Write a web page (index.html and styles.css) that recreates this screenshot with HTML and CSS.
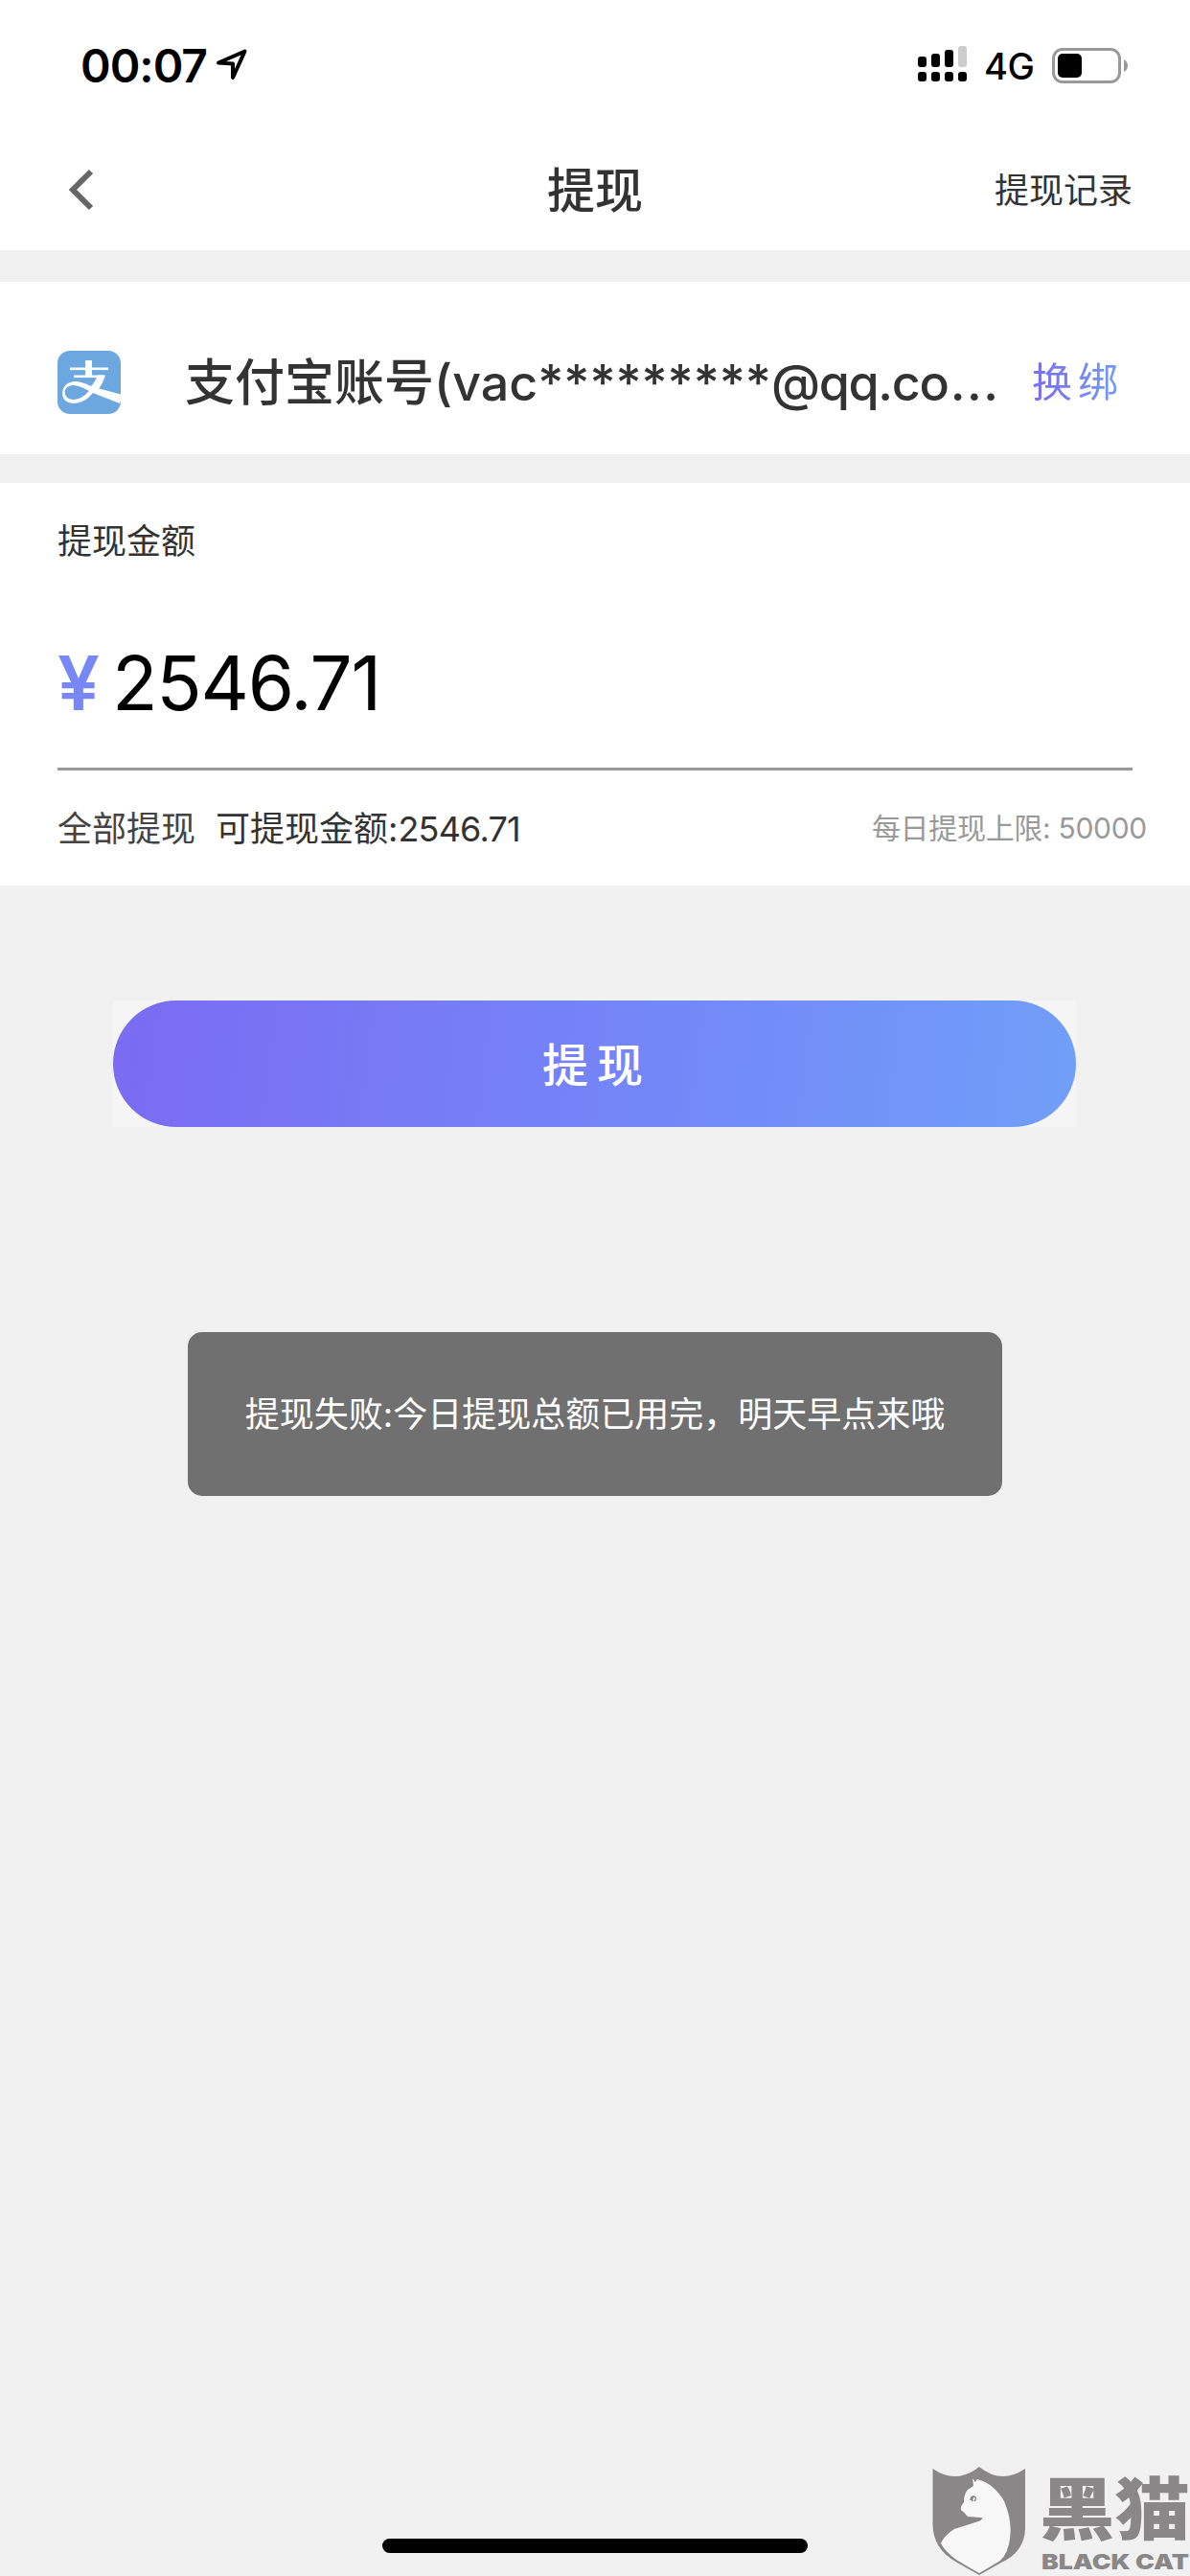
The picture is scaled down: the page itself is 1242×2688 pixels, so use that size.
FILE: index.html
```
<!DOCTYPE html>
<html lang="zh-CN">

<head>
    <meta charset="UTF-8">
    <meta name="viewport" content="width=device-width, initial-scale=1.0">
    <title>提现</title>
    <link rel="stylesheet" href="styles.css">
</head>

<body>
    <div class="status-bar">
        <span class="time">00:07</span>
        <svg class="location" width="34" height="34" viewBox="0 0 34 34">
            <path d="M3 15.5 L30.5 3.5 L18 31 V16.5 Z" fill="none" stroke="#000" stroke-width="4" stroke-linejoin="round"/>
        </svg>
        <svg class="signal" width="51" height="37" viewBox="0 0 51 37">
            <rect x="0" y="11" width="9" height="11" rx="3"/>
            <rect x="14" y="8" width="9" height="14" rx="3"/>
            <rect x="28" y="4" width="9" height="18" rx="3"/>
            <rect x="42" y="0" width="9" height="22" rx="3" fill="#ccc"/>
            <rect x="0" y="27" width="9" height="10" rx="3"/>
            <rect x="14" y="27" width="9" height="10" rx="3"/>
            <rect x="28" y="27" width="9" height="10" rx="3"/>
            <rect x="42" y="27" width="9" height="10" rx="3"/>
        </svg>
        <span class="network">4G</span>
        <svg class="battery" width="80" height="37" viewBox="0 0 80 37">
            <rect x="1.5" y="1.5" width="69" height="34" rx="9.5" fill="none" stroke="#999" stroke-width="3"/>
            <rect x="6" y="6" width="25" height="25" rx="5"/>
            <path d="M75 12 Q79 14 79 18.500 Q79 23 75 25 Z" fill="#999"/>
        </svg>
    </div>

    <div class="nav-bar">
        <svg class="back" width="28" height="44" viewBox="0 0 28 44">
            <path d="M23 3 L4 22 L23 41" fill="none" stroke="#666" stroke-width="6"/>
        </svg>
        <h1>提现</h1>
        <a class="record">提现记录</a>
    </div>

    <div class="card account">
        <svg class="alipay" width="66" height="66" viewBox="0 0 66 66">
            <rect width="66" height="66" rx="13" fill="#6ca8df"/>
            <g fill="#fff">
                <rect x="29" y="10" width="7" height="16"/>
                <rect x="13" y="17.500" width="40" height="2.600"/>
                <rect x="17" y="25.500" width="31" height="2.600"/>
                <path d="M42 25.500 H50 Q47 35 41.500 42 L66 51 L65 55 L37 44 Q28 55 17 55 Q5 54 5 44 Q6 33 18 32 Q25 32 35 37 Q39 33 42 25.500 Z M33 42 Q23 36 16 36 Q8 37 7.500 43 Q8 50 16 51 Q25 51 33 42 Z" fill-rule="evenodd"/>
                <path d="M38 38 L66 45.500 V53 L36 43 Z"/>
            </g>
        </svg>
        <div class="account-name">支付宝账号(vac*********<span class="mail">@qq.co</span><span class="dots">...</span></div>
        <a class="rebind">换绑</a>
    </div>

    <div class="card amount">
        <div class="label">提现金额</div>
        <div class="money">
            <span class="yen">¥</span>
            <span class="number">2546.71</span>
        </div>
        <div class="summary">
            <span class="all">全部提现</span>
            <span class="available">可提现金额:<span class="digits">2546.71</span></span>
            <span class="limit">每日提现上限: 50000</span>
        </div>
    </div>

    <div class="submit-wrap">
        <button class="submit">提现</button>
    </div>

    <div class="toast">提现失败:今日提现总额已用完，明天早点来哦</div>

    <div class="home-indicator"></div>

    <div class="watermark">
        <svg width="270" height="116" viewBox="0 0 270 116">
            <path d="M1.500 4 Q26 21 50 2 Q73 21 98 4 V67 Q97 91 73 102 L50 115 L27 102 Q1.500 88 1.500 62 Z" fill="#8a8788"/>
            <path d="M43 14 L46 18 L48 15 Q66 20 76 38 Q86 61 81 83 Q77 99 67 103 L50 113 L26 99 Q14 90 10 82 Q14 73 24 67 Q42 61 49 59 Q54 57 53 55 L38 54 Q34 49 31 47 Q30 44 34 39 Q34 30 38 26 L44 22 Z" fill="#f8f8f8"/>
            <path d="M41 37 Q41 33 44 33 Q42 36 43 38 M45 33 Q48 35 45 38" fill="none" stroke="#8a8788" stroke-width="1.500"/>
            <text class="mark-cn" x="113" y="72" textLength="157" lengthAdjust="spacingAndGlyphs">黑猫</text>
            <text class="mark-en" x="115" y="109" textLength="154" lengthAdjust="spacingAndGlyphs">BLACK CAT</text>
        </svg>
    </div>
</body>

</html>
```
FILE: styles.css
```
* {
    box-sizing: border-box;
    margin: 0;
    padding: 0;
}

body {
    font-family: Inter, 'Noto Sans CJK SC', sans-serif;
    background: #f1f1f1;
    width: 1242px;
    height: 2688px;
    color: #333;
    overflow: hidden;
    position: relative;
}

svg {
    flex-shrink: 0;
}

.status-bar {
    height: 132px;
    background: #fff;
    display: flex;
    align-items: center;
    padding: 5px 64px 0 84px;
    color: #000;
}

.time {
    width: 132px;
    font-size: 48px;
    font-weight: 600;
    letter-spacing: -1px;
    white-space: nowrap;
}

.location {
    margin: -4px 0 0 9px;
}

.signal {
    margin: -4px 0 0 auto;
}

.network {
    width: 53px;
    margin: 0 18px 0 18px;
    font-size: 38px;
    font-weight: 500;
    letter-spacing: -0.5px;
}

.battery {
    margin-top: -1px;
}

.nav-bar {
    height: 129px;
    background: #fff;
    display: grid;
    grid-template-columns: 1fr auto 1fr;
    align-items: center;
    padding: 0 60px;
}

.back {
    margin: 2px 0 0 12px;
}

h1 {
    margin-top: -4px;
    font-size: 50px;
    font-weight: 500;
}

.record {
    justify-self: end;
    margin-top: -2px;
    font-size: 36px;
}

.card {
    background: #fff;
}

.account {
    height: 180px;
    margin-top: 33px;
    padding-left: 60px;
    display: flex;
    align-items: center;
}

.alipay {
    margin-top: 30px;
}

.account-name {
    margin: 23px 0 0 67px;
    width: 846px;
    flex-shrink: 0;
    font-size: 52px;
    font-weight: 500;
    white-space: nowrap;
}

.mail {
    letter-spacing: -1.3px;
}

.dots {
    margin-left: 2px;
    letter-spacing: 1.5px;
}

.rebind {
    margin: 23px 0 0 38px;
    font-size: 42px;
    letter-spacing: 6px;
    white-space: nowrap;
    background: linear-gradient(90deg, #7b6cf3, #709ef7);
    -webkit-background-clip: text;
    background-clip: text;
    color: transparent;
}

.amount {
    height: 420px;
    margin-top: 30px;
    padding: 0 45px 0 60px;
}

.label {
    padding-top: 32px;
    height: 140px;
    font-size: 36px;
}

.money {
    height: 160px;
    width: 1122px;
    padding-bottom: 21px;
    border-bottom: 3px solid #999;
    display: flex;
    align-items: center;
}

.yen {
    width: 57px;
    font-size: 78px;
    font-weight: 600;
    color: #7887f7;
}

.number {
    font-size: 78px;
    letter-spacing: -1.2px;
    color: #000;
}

.summary {
    height: 116px;
    display: flex;
    align-items: center;
    font-size: 36px;
    white-space: nowrap;
}

.all {
    color: #444;
}

.available {
    margin-left: 21px;
}

.digits {
    letter-spacing: -0.8px;
}

.limit {
    margin-left: auto;
    font-size: 30px;
    letter-spacing: -0.3px;
    color: #999;
}

.submit-wrap {
    width: 1005px;
    height: 132px;
    margin: 120px 0 0 118px;
    background: #f5f5f5;
}

.submit {
    width: 100%;
    height: 100%;
    padding: 0 0 4px 5px;
    border: none;
    border-radius: 66px;
    background: linear-gradient(97deg, #7b6bf2, #7388f8 58%, #709ff8);
    color: #fff;
    font-family: inherit;
    font-size: 48px;
    font-weight: 500;
    letter-spacing: 9px;
}

.toast {
    position: absolute;
    left: 196px;
    top: 1390px;
    width: 850px;
    height: 171px;
    border-radius: 15px;
    background: #707070;
    color: #fff;
    font-size: 36px;
    line-height: 172px;
    text-align: center;
    white-space: nowrap;
}

.home-indicator {
    position: absolute;
    left: 399px;
    bottom: 24px;
    width: 444px;
    height: 15px;
    border-radius: 8px;
    background: #000;
}

.watermark {
    position: absolute;
    right: 0;
    bottom: 0;
    height: 116px;
}

.watermark svg {
    overflow: visible;
}

.watermark text {
    fill: #8a8788;
    font-weight: 900;
}

.mark-cn {
    font-family: 'Noto Sans CJK SC', sans-serif;
    font-size: 71px;
}

.mark-en {
    font-size: 22px;
}
```
